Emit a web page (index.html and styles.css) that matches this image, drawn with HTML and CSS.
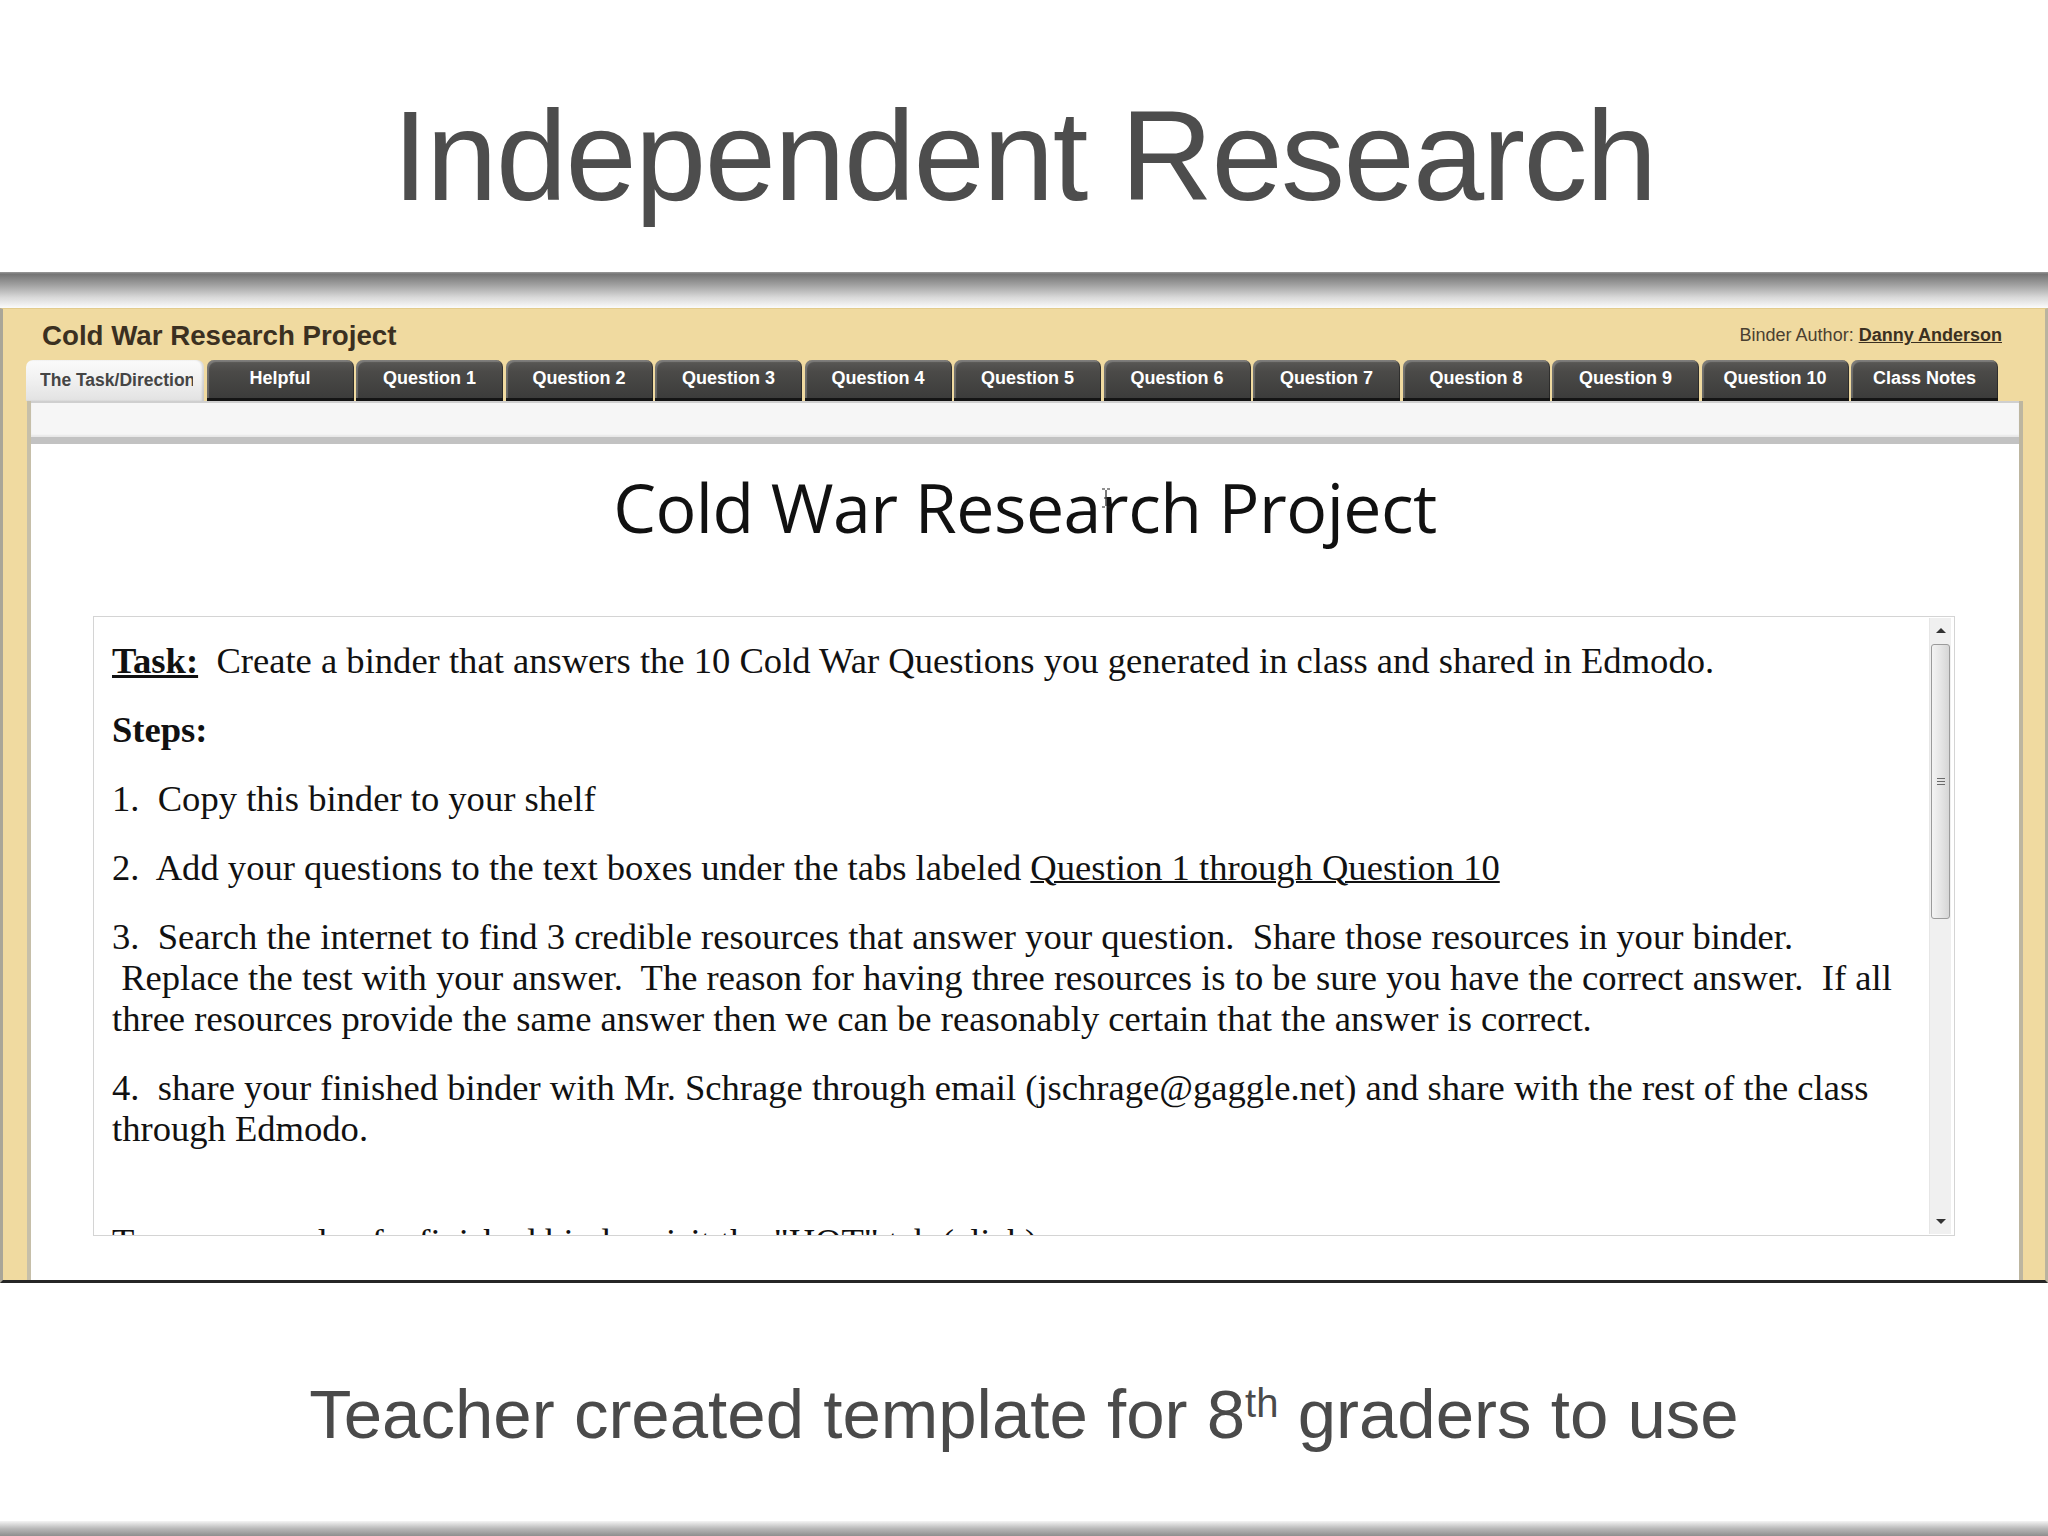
FILE: index.html
```html
<!DOCTYPE html>
<html lang="en">
<head>
<meta charset="utf-8">
<title>Independent Research</title>
<link rel="stylesheet" href="styles.css">
</head>
<body>
<div class="slide">
  <header class="slide-head">
    <h1 class="slide-title">Independent Research</h1>
  </header>
  <div class="band band-top"></div>

  <section class="binder">
    <div class="binder-head">
      <div class="binder-title">Cold War Research Project</div>
      <div class="binder-author">Binder Author: <span class="author-link">Danny Anderson</span></div>
    </div>

    <nav class="tabs">
      <div class="tab tab-active"><span>The Task/Directions</span></div>
      <div class="tab">Helpful</div>
      <div class="tab">Question 1</div>
      <div class="tab">Question 2</div>
      <div class="tab">Question 3</div>
      <div class="tab">Question 4</div>
      <div class="tab">Question 5</div>
      <div class="tab">Question 6</div>
      <div class="tab">Question 7</div>
      <div class="tab">Question 8</div>
      <div class="tab">Question 9</div>
      <div class="tab">Question 10</div>
      <div class="tab">Class Notes</div>
    </nav>

    <div class="frame">
      <div class="subbar"></div>
      <div class="page">
        <h2 class="page-title">Cold War Research Project</h2>
        <svg class="cursor" width="10" height="20" viewBox="0 0 10 20">
          <path d="M1 1 H4 M6 1 H9 M5 2 V18 M1 19 H4 M6 19 H9 M3 10 H7" stroke="#222" stroke-width="1.2" fill="none"/>
        </svg>
        <div class="textbox">
          <div class="text">
            <p><span class="task">Task:</span>&nbsp; Create a binder that answers the 10 Cold War Questions you generated in class and shared in Edmodo.</p>
            <p><b>Steps:</b></p>
            <p>1.&nbsp; Copy this binder to your shelf</p>
            <p>2.&nbsp; Add your questions to the text boxes under the tabs labeled <u>Question 1 through Question 10</u></p>
            <p>3.&nbsp; Search the internet to find 3 credible resources that answer your question.&nbsp; Share those resources in your binder.<br>&nbsp;Replace the test with your answer.&nbsp; The reason for having three resources is to be sure you have the correct answer.&nbsp; If all<br>three resources provide the same answer then we can be reasonably certain that the answer is correct.</p>
            <p class="p-last">4.&nbsp; share your finished binder with Mr. Schrage through email (jschrage@gaggle.net) and share with the rest of the class<br>through Edmodo.</p>
            <p>To see a sample of a finished binder visit the "HOT" tab (click)</p>
          </div>
          <div class="scrollbar">
            <div class="sb-arrow sb-up"></div>
            <div class="sb-thumb"><span class="grip"></span></div>
            <div class="sb-track"></div>
            <div class="sb-arrow sb-down"></div>
          </div>
        </div>
      </div>
    </div>
  </section>

  <footer class="caption">
    <p class="caption-text">Teacher created template for 8<sup class="sup">th</sup> graders to use</p>
  </footer>
  <div class="band band-bottom"></div>
</div>
</body>
</html>
```

FILE: styles.css
```css
html, body {
  margin: 0;
  padding: 0;
  background: #ffffff;
}

.slide {
  width: 2048px;
  height: 1536px;
  overflow: hidden;
  display: flex;
  flex-direction: column;
  font-family: "Liberation Sans", Arial, sans-serif;
}

/* ---------- slide title ---------- */
.slide-head {
  height: 272px;
  box-sizing: border-box;
  padding-top: 92px;
  flex: none;
}
.slide-title {
  margin: 0;
  text-align: center;
  font-weight: 400;
  font-size: 128px;
  line-height: 128px;
  letter-spacing: -1.6px;
  color: #4d4d4d;
}

.band { flex: none; }
.band-top {
  height: 36px;
  background: linear-gradient(#9a9a9a 0, #747474 6%, #9f9f9f 35%, #d8d8d8 70%, #fbfbfb 100%);
}
.band-bottom {
  height: 15px;
  background: linear-gradient(#f4f4f4, #b9b9b9 50%, #8e8e8e);
}

/* ---------- binder panel ---------- */
.binder {
  flex: none;
  height: 975px;
  box-sizing: border-box;
  background: #f0daa0;
  border-top: 1px solid #e2cb8c;
  border-left: 3px solid #aaa698;
  border-right: 3px solid #b9b39f;
  border-bottom: 3px solid #262626;
  display: flex;
  flex-direction: column;
}

.binder-head {
  height: 51px;
  flex: none;
  display: flex;
  justify-content: space-between;
  align-items: flex-start;
  padding: 0 43px 0 39px;
}
.binder-title {
  padding-top: 13px;
  font-weight: 700;
  font-size: 27.7px;
  line-height: 27px;
  color: #3b3021;
}
.binder-author {
  padding-top: 17px;
  font-size: 18px;
  line-height: 18px;
  color: #4a4030;
}
.author-link {
  font-weight: 700;
  color: #3b3021;
  text-decoration: underline;
}

/* ---------- tabs ---------- */
.tabs {
  height: 41px;
  flex: none;
  display: flex;
  gap: 2.5px;
  padding-left: 23px;
}
.tab {
  width: 147px;
  flex: none;
  box-sizing: border-box;
  height: 41px;
  border-radius: 7px 7px 0 0;
  background: linear-gradient(#5b5a57 0, #4b4a48 30%, #3c3c3b 100%);
  border-bottom: 3px solid #141414;
  box-shadow: inset 2px 2px 1px rgba(255, 255, 255, 0.22), inset -1px 0 0 rgba(0, 0, 0, 0.35);
  color: #ffffff;
  font-weight: 700;
  font-size: 18px;
  line-height: 37px;
  text-align: center;
  white-space: nowrap;
}
.tab-active {
  width: 178px;
  border-bottom: none;
  background: linear-gradient(#fbfbfb 0, #f0f0f0 50%, #e2e2e2 100%);
  box-shadow: inset -2px 0 2px rgba(0, 0, 0, 0.12);
  color: #454545;
  text-align: left;
  font-size: 17.5px;
  line-height: 41px;
  padding: 0 11px 0 14px;
  overflow: hidden;
}
.tab-active span {
  display: block;
  overflow: hidden;
}

/* ---------- frame below the tabs ---------- */
.frame {
  flex: 1;
  display: flex;
  flex-direction: column;
  margin: 0 22px 0 24px;
  border-left: 4px solid #c6bfa9;
  border-right: 4px solid #bdb6a0;
  position: relative;
}
.subbar {
  height: 43px;
  flex: none;
  box-sizing: border-box;
  background: #f6f6f6;
  border-top: 2px solid #cfcfcf;
  border-bottom: 7px solid #c2c2c2;
  box-shadow: inset 0 -2px 2px rgba(0, 0, 0, 0.06);
}
.page {
  flex: 1;
  background: #ffffff;
  position: relative;
  padding-top: 30px;
}
.page-title {
  margin: 0;
  text-align: center;
  font-family: "Open Sans", "DejaVu Sans", sans-serif;
  font-weight: 400;
  font-size: 68px;
  line-height: 66px;
  letter-spacing: -0.5px;
  color: #111111;
}
.cursor {
  position: absolute;
  left: 1070px;
  top: 44px;
}

/* ---------- text box ---------- */
.textbox {
  position: relative;
  margin: 76px 64px 0 62px;
  height: 620px;
  box-sizing: border-box;
  border: 1px solid #d4d4d4;
  overflow: hidden;
}
.text {
  padding: 23px 30px 0 18px;
  font-family: "Liberation Serif", "Times New Roman", serif;
  font-size: 36.6px;
  line-height: 41px;
  color: #111111;
  white-space: nowrap;
}
.text p {
  margin: 0 0 28px 0;
}
.text p.p-last {
  margin-bottom: 72px;
}
.task {
  font-weight: 700;
  text-decoration: underline;
}
.text u {
  text-decoration-thickness: 2px;
}

/* ---------- fake scrollbar ---------- */
.scrollbar {
  position: absolute;
  top: 1px;
  right: 3px;
  bottom: 1px;
  width: 21px;
  background: #f0f0f0;
  border-left: 1px solid #e6e6e6;
  display: flex;
  flex-direction: column;
}
.sb-arrow {
  height: 26px;
  flex: none;
  position: relative;
}
.sb-arrow::after {
  content: "";
  position: absolute;
  left: 6px;
  width: 0;
  height: 0;
  border-left: 5px solid transparent;
  border-right: 5px solid transparent;
}
.sb-up::after {
  top: 10px;
  border-bottom: 5px solid #333;
}
.sb-down::after {
  bottom: 10px;
  border-top: 5px solid #333;
}
.sb-thumb {
  height: 275px;
  flex: none;
  margin: 0 1px;
  box-sizing: border-box;
  border: 1px solid #9b9b9b;
  border-radius: 3px;
  background: linear-gradient(90deg, #f4f4f4, #e6e6e6 50%, #d6d6d6);
  display: flex;
  align-items: center;
  justify-content: center;
}
.grip {
  width: 8px;
  height: 7px;
  background: repeating-linear-gradient(#6a6a6a 0, #6a6a6a 1px, transparent 1px, transparent 3px);
}
.sb-track {
  flex: 1;
}

/* ---------- caption ---------- */
.caption {
  flex: 1;
  padding-top: 97px;
  box-sizing: border-box;
}
.caption-text {
  margin: 0;
  text-align: center;
  font-size: 69px;
  line-height: 69px;
  color: #4a4a4a;
}
.sup {
  font-size: 40px;
  line-height: 0;
  vertical-align: 21px;
}
```
